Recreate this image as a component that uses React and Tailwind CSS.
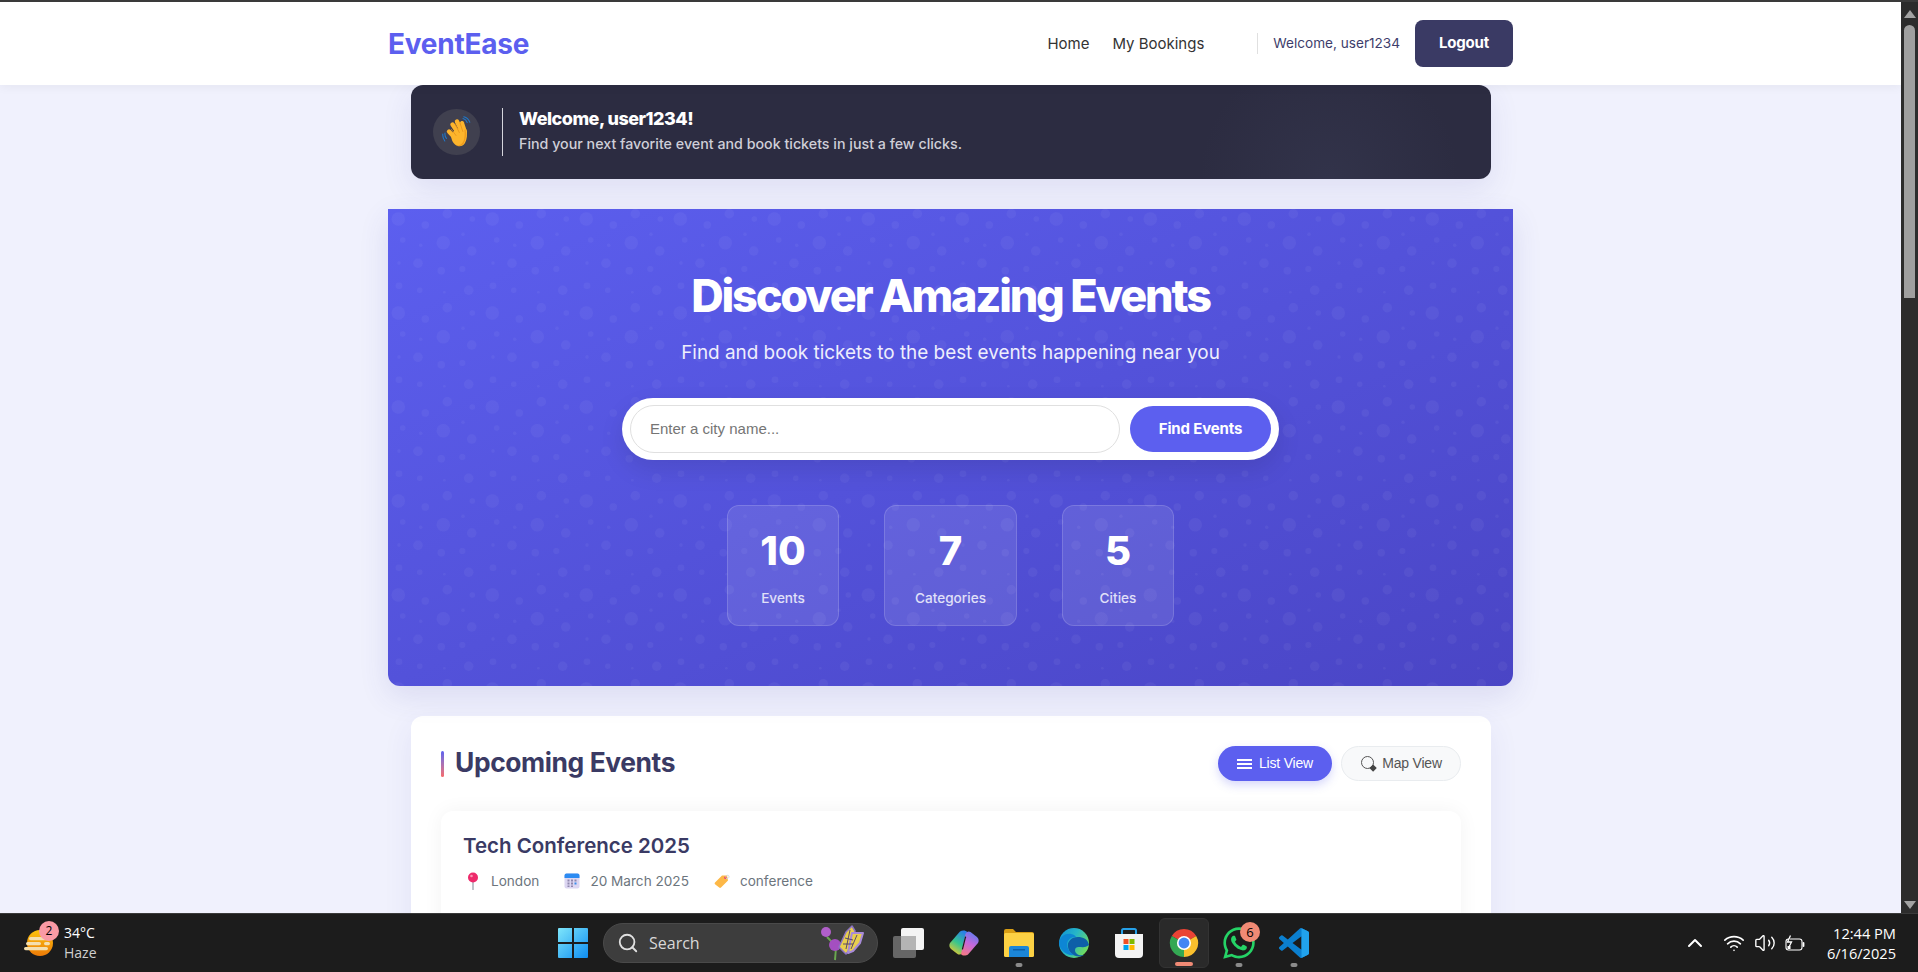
import React from "react";
import { ChevronUp, Search, Volume2, Wifi } from "lucide-react";
import { FaWhatsapp } from "react-icons/fa";

const INTER = "font-['Inter',sans-serif]";

// circles of the hero's repeating dot tile
const DOTS = [
  [10.3, 10, 6.7], [37.3, 16, 3.7], [59.3, 4.7, 4.7], [84.3, 10, 2.7], [14.7, 31, 2.7], [32.7, 36.3, 1.7],
  [55.3, 33.7, 6.7], [75, 25.3, 1.7], [83.7, 42, 4.7], [11, 54, 1.7], [30, 54.3, 4.7], [53.3, 61.7, 3.7],
  [74.3, 60, 3], [11, 76.7, 3.3], [31.7, 81.3, 2.7], [56.3, 83.3, 1.3], [80.7, 81.3, 4.7],
];

const STATS = [
  { value: "10", label: "Events", width: "w-[112px]" },
  { value: "7", label: "Categories", width: "w-[133px]" },
  { value: "5", label: "Cities", width: "w-[112px]" },
];

const HeroDots = () => (
  <svg className="absolute inset-0 w-full h-full" aria-hidden="true">
    <defs>
      <pattern id="hero-dots" width="94" height="94" patternUnits="userSpaceOnUse">
        {DOTS.map(([cx, cy, r]) => (
          <circle key={`${cx}-${cy}`} cx={cx} cy={cy} r={r} fill="#fff" fillOpacity="0.045" />
        ))}
      </pattern>
    </defs>
    <rect width="100%" height="100%" fill="url(#hero-dots)" />
  </svg>
);

const WaveHand = () => (
  <svg width="30" height="32" viewBox="0 0 30 32" fill="none">
    <path d="M3 17c-.3 2 .3 4 1.500 5.500M.8 18c-.3 2.700.5 5 2 7" stroke="#1f77c9" strokeWidth="1.100" strokeLinecap="round" />
    <path d="M21 2.500c2 .5 3.500 2 4.200 4M21.800.7c3 .7 5 2.800 6 5.500" stroke="#1f77c9" strokeWidth="1.100" strokeLinecap="round" />
    <g stroke="#fdb52c" strokeLinecap="round">
      <path d="M7 15.500l6 6.500" strokeWidth="4.400" />
      <path d="M10.500 8.500l6 9" strokeWidth="4.400" />
      <path d="M15 5.500l5 10" strokeWidth="4.400" />
      <path d="M20 7l3 9" strokeWidth="4" />
    </g>
    <path d="M9 20c2-6 7-9 12-7l3.500.5c1 5 .5 10-1.500 13.500-2.500 4-7 4-10 1.500C11 27 9.500 24 9 20z" fill="#fdb52c" />
    <path d="M23.500 13.500c1 5 .5 10-1.500 13.500-2 3-5 3.800-8 2.800 4 0 6.500-2 7.700-5 1-3 1.200-7 .8-11z" fill="#ee9a1b" />
    <path d="M9.500 13.500l4.500 6M13.300 8.500l4 8M18 7l2.800 8.500" stroke="#e5921a" strokeWidth=".8" strokeLinecap="round" />
  </svg>
);

const PinIcon = () => (
  <svg width="16" height="18" viewBox="0 0 16 18">
    <path d="M8 8v9.500" stroke="#a9aeb8" strokeWidth="1.500" strokeLinecap="round" />
    <circle cx="8" cy="5.500" r="5" fill="#ee2a6b" />
    <circle cx="6.500" cy="4" r="1.300" fill="#fb94b4" />
  </svg>
);

const CalendarIcon = () => (
  <svg width="16" height="16" viewBox="0 0 16 16">
    <rect x="0.500" y="0.500" width="15" height="15" rx="2" fill="#dcd6f2" />
    <path d="M.5 5V2.500a2 2 0 0 1 2-2h11a2 2 0 0 1 2 2V5z" fill="#2c8bf2" />
    <g fill="#8f88ad">
      <rect x="3.500" y="6.500" width="2" height="2" /><rect x="7" y="6.500" width="2" height="2" /><rect x="10.500" y="6.500" width="2" height="2" />
      <rect x="3.500" y="9.500" width="2" height="2" /><rect x="7" y="9.500" width="2" height="2" /><rect x="10.500" y="9.500" width="2" height="2" fill="#3b8eea" />
      <rect x="3.500" y="12.500" width="2" height="1.500" /><rect x="7" y="12.500" width="2" height="1.500" />
    </g>
  </svg>
);

const TagIcon = () => (
  <svg width="16" height="15" viewBox="0 0 16 15">
    <path d="M1 8.500L8 1.500 13 1.500 14 6.500 7 13.500a1.300 1.300 0 0 1-1.800 0L1 10.300a1.300 1.300 0 0 1 0-1.800z" fill="#fdb847" />
    <circle cx="11.300" cy="3.800" r="1.200" fill="#e9476c" />
    <path d="M11.500 3.500C12 1 14.800.5 15 2.500c.2 1.500-1.500 2.500-3 2" stroke="#c9ced6" strokeWidth=".8" fill="none" />
  </svg>
);

const MapGlyph = () => (
  <svg width="18" height="18" viewBox="0 0 18 18" fill="none">
    <circle cx="7.500" cy="7.500" r="6" stroke="#555" strokeWidth="1" />
    <rect x="10.500" y="10.500" width="5.200" height="5.200" transform="rotate(45 13.100 13.100)" fill="#444" />
  </svg>
);

const WeatherIcon = () => (
  <svg width="30" height="28" viewBox="0 0 30 28">
    <defs>
      <linearGradient id="sun" x1="0" y1="0" x2="0" y2="1">
        <stop offset="0" stopColor="#fcc30b" />
        <stop offset="1" stopColor="#ec7a08" />
      </linearGradient>
    </defs>
    <circle cx="16" cy="14" r="13" fill="url(#sun)" />
    <g fill="#f4dfae">
      <rect x="5" y="8" width="22" height="3.200" rx="1.600" />
      <rect x="2" y="13" width="15" height="3.200" rx="1.600" />
      <rect x="20" y="13" width="6" height="3.200" rx="1.600" />
      <rect x="0" y="18" width="24" height="3.200" rx="1.600" />
    </g>
  </svg>
);

const WindowsLogo = () => (
  <svg width="30" height="30" viewBox="0 0 30 30">
    <defs>
      <linearGradient id="win" x1="0" y1="0" x2="1" y2="1">
        <stop offset="0" stopColor="#7ee6fb" />
        <stop offset="1" stopColor="#0f8df0" />
      </linearGradient>
    </defs>
    <path d="M0 1a1 1 0 0 1 1-1h13v14H0zM16 0h13a1 1 0 0 1 1 1v13H16zM0 16h14v14H1a1 1 0 0 1-1-1zM16 16h14v13a1 1 0 0 1-1 1H16z" fill="url(#win)" />
  </svg>
);

const Butterfly = () => (
  <svg width="46" height="36" viewBox="0 0 46 36">
    <path d="M16 18c1 6 1 11 0 17M8 12c3 3 6 5 8 10" stroke="#6aa84f" strokeWidth="2" fill="none" />
    <circle cx="7" cy="7" r="5" fill="#b05fc9" />
    <circle cx="16" cy="20" r="6" fill="#a44fc0" />
    <path d="M20 22L27 7l6-6 3 5-2 14-7 9z" fill="#e8cf4e" stroke="#8d74c4" strokeWidth="1.500" strokeLinejoin="round" />
    <path d="M33 8l11 0-3 10-7 8-5 2z" fill="#e8cf4e" stroke="#a88bd8" strokeWidth="2" strokeLinejoin="round" />
    <path d="M26 13l8 2M24 19l10 0M31 5l-4 19M38 10l-6 14" stroke="#4b3a6d" strokeWidth=".9" />
  </svg>
);

const TaskView = () => (
  <svg width="32" height="30" viewBox="0 0 32 30">
    <rect x="0" y="8" width="23" height="22" rx="2" fill="#666" />
    <rect x="8" y="0" width="23" height="22" rx="2" fill="#f4f4f4" />
    <rect x="8" y="8" width="15" height="14" fill="#b4b4b4" />
  </svg>
);

const Copilot = () => (
  <svg width="30" height="30" viewBox="0 0 30 30">
    <defs>
      <linearGradient id="cop-a" x1="0.700" y1="0" x2="0.200" y2="1">
        <stop offset="0" stopColor="#2a7fe8" />
        <stop offset="0.500" stopColor="#36c58e" />
        <stop offset="1" stopColor="#f6c928" />
      </linearGradient>
      <linearGradient id="cop-b" x1="0.700" y1="0" x2="0.300" y2="1">
        <stop offset="0" stopColor="#f2788a" />
        <stop offset="0.500" stopColor="#c468dc" />
        <stop offset="1" stopColor="#5a7df0" />
      </linearGradient>
    </defs>
    <path d="M11 3.500C13 2 17 2 18 4L13.500 24c-.5 2-3 3.500-5 2L2 21C0 19 0 17 1 15Z" fill="url(#cop-a)" />
    <path d="M11 3.500C13 2 17 2 18 4L13.500 24c-.5 2-3 3.500-5 2L2 21C0 19 0 17 1 15Z" fill="url(#cop-b)" transform="rotate(180 15 15)" />
    <path d="M16.500 9l-3 12" stroke="#1c1c1c" strokeWidth="1.200" strokeLinecap="round" />
  </svg>
);

const Explorer = () => (
  <svg width="30" height="28" viewBox="0 0 30 28">
    <path d="M0 2a2 2 0 0 1 2-2h7l3 3h16a2 2 0 0 1 2 2v3H0z" fill="#d99e14" />
    <rect x="0" y="4" width="30" height="24" rx="1.500" fill="#fcd144" />
    <path d="M5 19a2 2 0 0 1 2-2h16a2 2 0 0 1 2 2v9H5z" fill="#1b86d8" />
    <rect x="9" y="20" width="12" height="1.500" fill="#0c5fa8" />
  </svg>
);

const Edge = () => (
  <svg width="30" height="30" viewBox="0 0 30 30">
    <defs>
      <linearGradient id="edge" x1="0" y1="0" x2="1" y2="0.600">
        <stop offset="0" stopColor="#0f8fd8" />
        <stop offset="0.500" stopColor="#26b6c7" />
        <stop offset="1" stopColor="#6fdb5f" />
      </linearGradient>
    </defs>
    <circle cx="15" cy="15" r="15" fill="url(#edge)" />
    <path d="M30 17c-1-6-6-8-11-8-7 0-11 5-10 10 1 6 6 10 12 9.500 2-.2 3-.7 4-1.500-5 1-9-1-9-5 0-2 1.500-3 3.500-3 4 0 7 1 10.500-2z" fill="#0e5fa8" />
    <path d="M0 15C1 8 7 5 12 6c3 .5 4.500 2 5 3-6-.5-10 4-8.500 10 .7 3 3 6 6.500 8-6 1.500-14-4-15-12z" fill="#0d86d4" />
  </svg>
);

const Store = () => (
  <svg width="30" height="30" viewBox="0 0 30 30">
    <path d="M8 6V2.500A1.500 1.500 0 0 1 9.500 1h11A1.500 1.500 0 0 1 22 2.500V6" stroke="#26a0e8" strokeWidth="2" fill="none" />
    <path d="M1 6h28v20a4 4 0 0 1-4 4H5a4 4 0 0 1-4-4z" fill="#f3f3f3" />
    <rect x="9.500" y="11" width="5" height="5" fill="#f25022" />
    <rect x="15.500" y="11" width="5" height="5" fill="#7fba00" />
    <rect x="9.500" y="17" width="5" height="5" fill="#00a4ef" />
    <rect x="15.500" y="17" width="5" height="5" fill="#ffb900" />
  </svg>
);

const Chrome = () => (
  <svg width="30" height="30" viewBox="0 0 32 32">
    <path d="M16 16L3 8.500A15 15 0 0 1 29 8.500Z" fill="#ea4335" />
    <path d="M16 16L29 8.500A15 15 0 0 1 16 31Z" fill="#fbc02d" />
    <path d="M16 16L16 31A15 15 0 0 1 3 8.500Z" fill="#34a853" />
    <circle cx="16" cy="16" r="7.500" fill="#fff" />
    <circle cx="16" cy="16" r="5.800" fill="#4285f4" />
  </svg>
);

const VsCode = () => (
  <svg width="30" height="30" viewBox="0 0 24 24">
    <path d="M23.15 2.587L18.21.21a1.494 1.494 0 0 0-1.705.29l-9.46 8.63-4.12-3.128a.999.999 0 0 0-1.276.057L.327 7.261A1 1 0 0 0 .326 8.74L3.899 12 .326 15.26a1 1 0 0 0 .001 1.479L1.65 17.94a.999.999 0 0 0 1.276.057l4.12-3.128 9.46 8.63a1.492 1.492 0 0 0 1.704.29l4.942-2.377A1.5 1.5 0 0 0 24 20.06V3.939a1.5 1.5 0 0 0-.85-1.352zm-5.146 14.861L10.826 12l7.178-5.448v10.896z" fill="#0b7fcf" />
    <path d="M18 0.100l5.150 2.487A1.500 1.500 0 0 1 24 3.939V20.060a1.500 1.500 0 0 1-.85 1.353L18 23.900V17.448L18.004 6.552z" fill="#21a2ec" />
  </svg>
);

const BatteryIcon = () => (
  <svg width="21" height="17" viewBox="0 0 21 17" fill="none" stroke="#fff" strokeWidth="1.100">
    <rect x="1" y="4" width="16" height="11" rx="2.500" />
    <path d="M18.500 8v3" strokeWidth="1.800" strokeLinecap="round" />
    <path d="M5.500 0.500L2.500 7h4L4 12" fill="#1c1c1c" strokeWidth="1.300" />
    <rect x="2.500" y="11" width="3" height="3" fill="#fff" stroke="none" />
  </svg>
);

const Dot = ({ wide }) => (
  <span className={wide ? "absolute bottom-[1px] left-1/2 -translate-x-1/2 w-[18px] h-[4px] rounded-full bg-[#f08a75]" : "absolute bottom-[1px] left-1/2 -translate-x-1/2 w-[7px] h-[4px] rounded-full bg-[#8b8b8b]"} />
);

const Navbar = () => (
  <nav className="h-[83px] bg-white shadow-[0_2px_10px_rgba(0,0,0,0.05)] relative z-10">
    <div className="w-[1125px] mx-auto h-full flex items-center">
      <span className="text-[28px] font-bold text-[#5c5fef] tracking-[-0.25px]">EventEase</span>
      <a className="ml-auto pt-[2px] text-[15px] font-normal text-[#333]">Home</a>
      <a className="ml-[23px] pt-[2px] text-[15px] font-normal text-[#333]">My Bookings</a>
      <div className="ml-[53px] w-px h-[21px] bg-[#e0e0e0]"></div>
      <span className="ml-[15px] text-[13.6px] font-normal text-[#3d3d6b]">Welcome, user1234</span>
      <button className="ml-[15px] w-[98px] h-[47px] rounded-lg bg-[#3a3a64] text-white text-[15px] font-bold tracking-[-0.2px]">Logout</button>
    </div>
  </nav>
);

const WelcomeBanner = () => (
  <div className="ml-[23px] mr-[22px] h-[94px] rounded-xl bg-[#2c2c41] bg-[radial-gradient(circle_at_85%_100%,#32334a,#2c2c41_14%)] flex items-center pl-[22px] shadow-[0_10px_30px_rgba(60,60,160,0.1)]">
    <div className="w-[47px] h-[46px] rounded-full bg-[#40404f] flex items-center justify-center">
      <WaveHand />
    </div>
    <div className="ml-[22px] w-px h-[48px] bg-[#d5d5dc]"></div>
    <div className="ml-4 -mt-[3px]">
      <h3 className="text-[18px] leading-[26px] font-extrabold text-white tracking-[-0.5px]">Welcome, user1234!</h3>
      <p className="text-[14.25px] leading-[23px] font-medium text-[#cfcfd8]">Find your next favorite event and book tickets in just a few clicks.</p>
    </div>
  </div>
);

const Hero = () => (
  <section className="relative mt-[30px] h-[477px] rounded-b-xl overflow-hidden bg-gradient-to-br from-[#5c5fef] to-[#4a45c5] shadow-[0_10px_30px_rgba(60,60,160,0.12)] pt-[60px]">
    <HeroDots />
    <div className="relative flex flex-col items-center">
      <h1 className="text-[45px] leading-[54px] font-extrabold text-white tracking-[-2.2px]">Discover Amazing Events</h1>
      <p className="mt-[15px] text-[18.9px] leading-[30px] font-normal text-[#eeeefc]">Find and book tickets to the best events happening near you</p>
      <div className="mt-[30px] w-[657px] h-[62px] rounded-full bg-white flex items-center pl-2 pr-2 shadow-[0_10px_25px_rgba(0,0,0,0.1)]">
        <input
          placeholder="Enter a city name..."
          className="w-[490px] h-[48px] rounded-full border border-[#e0e0e0] bg-white pl-[19px] pr-5 pb-px text-[15px] font-['Liberation_Sans',sans-serif] outline-none placeholder:text-[#757575]"
        />
        <button className="ml-[10px] w-[141px] h-[46px] rounded-full bg-[#5c5fef] text-white text-[15px] font-bold tracking-[-0.15px]">Find Events</button>
      </div>
      <div className="mt-[45px] flex gap-[45px]">
        {STATS.map((stat) => (
          <div key={stat.label} className={`${stat.width} h-[121px] pt-[21px] rounded-xl bg-white/10 border border-white/15 flex flex-col items-center`}>
            <span className="text-[40px] leading-[48px] font-extrabold text-white">{stat.value}</span>
            <span className="mt-[13px] text-[13.6px] leading-[21px] font-medium text-[#e0e0f8]">{stat.label}</span>
          </div>
        ))}
      </div>
    </div>
  </section>
);

const EventsSection = () => (
  <section className="ml-[23px] mr-[22px] mt-[30px] bg-white rounded-t-xl pl-[30px] pr-[30px] pt-[30px] h-[400px] shadow-[0_10px_30px_rgba(60,60,160,0.08)]">
    <div className="flex items-center justify-between h-[35px]">
      <div className="flex items-center">
        <span className="w-[3px] h-[26px] rounded-full bg-gradient-to-b from-[#5c5fef] to-[#f76a6a]"></span>
        <h2 className="ml-[11px] -mt-[2px] text-[26.4px] font-bold text-[#3a3a64] tracking-[-0.4px]">Upcoming Events</h2>
      </div>
      <div className="flex gap-[9px] font-['Liberation_Sans',sans-serif] text-[14px] tracking-[-0.2px]">
        <button className="w-[114px] h-[35px] rounded-full bg-[#5c5fef] text-white flex items-center justify-center gap-[7px] shadow-[0_4px_10px_rgba(92,95,239,0.25)]">
          <span className="flex flex-col gap-[2px]">
            <span className="block w-[15px] h-[2px] bg-white"></span>
            <span className="block w-[15px] h-[2px] bg-white"></span>
            <span className="block w-[15px] h-[2px] bg-white"></span>
          </span>
          List View
        </button>
        <button className="w-[120px] h-[35px] rounded-full bg-[#f8f9fa] border border-[#e9ecef] text-[#555] flex items-center justify-center gap-[4px]">
          <MapGlyph />
          Map View
        </button>
      </div>
    </div>
    <div className="mt-[30px] rounded-xl bg-white h-[300px] px-[22px] pt-[21px] shadow-[0_0_20px_rgba(0,0,0,0.05)]">
      <h3 className="text-[20.5px] leading-[28px] font-semibold text-[#3a3a64]">Tech Conference 2025</h3>
      <div className="mt-[10px] flex items-center gap-[23px] text-[13.6px] leading-[22px] text-[#6c757d]">
        <span className="flex items-center gap-2"><span className="w-5 flex justify-center"><PinIcon /></span>London</span>
        <span className="flex items-center gap-2"><span className="w-5 flex justify-center"><CalendarIcon /></span>20 March 2025</span>
        <span className="flex items-center gap-2"><span className="w-5 flex justify-center"><TagIcon /></span>conference</span>
      </div>
    </div>
  </section>
);

const Scrollbar = () => (
  <div className="w-[17px] bg-[#2c2c2c] flex flex-col items-center">
    <svg className="mt-[8px]" width="12" height="8" viewBox="0 0 12 8"><path d="M6 0l6 8H0z" fill="#a3a3a3" /></svg>
    <div className="mt-[7px] w-[11px] h-[273px] rounded-t-[6px] bg-[#9f9f9f]"></div>
    <svg className="mt-auto mb-[4px]" width="12" height="8" viewBox="0 0 12 8"><path d="M6 8l6-8H0z" fill="#a3a3a3" /></svg>
  </div>
);

const Taskbar = () => (
  <footer className="h-[59px] shrink-0 bg-[#1c1c1c] border-t border-[#3a3a3a] flex items-center font-['Open_Sans',sans-serif] text-white">
    <div className="w-[558px] pl-[24px] flex items-center relative">
      <WeatherIcon />
      <span className="absolute left-[39px] -top-[2px] w-5 h-5 rounded-full bg-[#f99aa5] text-black text-[12px] leading-5 text-center">2</span>
      <div className="ml-[10px] flex flex-col">
        <span className="text-[14px] leading-[20px]">34°C</span>
        <span className="text-[14px] leading-[20px] text-[#cfcfcf]">Haze</span>
      </div>
    </div>
    <WindowsLogo />
    <div className="ml-[15px] w-[275px] h-[40px] rounded-full bg-[#3d3d3d] border border-[#4a4a4a] flex items-center pl-[13px] pr-[12px]">
      <Search size={22} strokeWidth={2} className="text-[#e0e0e0]" />
      <span className="ml-[10px] text-[16px] text-[#d8d8d8]">Search</span>
      <span className="ml-auto"><Butterfly /></span>
    </div>
    <div className="ml-[6px] flex gap-[5px]">
      <div className="relative w-[50px] h-[50px] flex items-center justify-center"><TaskView /></div>
      <div className="relative w-[50px] h-[50px] flex items-center justify-center"><Copilot /></div>
      <div className="relative w-[50px] h-[50px] flex items-center justify-center"><Explorer /><Dot /></div>
      <div className="relative w-[50px] h-[50px] flex items-center justify-center"><Edge /></div>
      <div className="relative w-[50px] h-[50px] flex items-center justify-center"><Store /></div>
      <div className="relative w-[50px] h-[50px] rounded-md bg-[#2a2a2a] border border-[#333] flex items-center justify-center"><Chrome /><Dot wide /></div>
      <div className="relative w-[50px] h-[50px] flex items-center justify-center">
        <FaWhatsapp size={36} className="text-[#25d366]" />
        <span className="absolute top-[4px] right-[4px] w-5 h-5 rounded-full bg-[#f08a75] text-black text-[13px] leading-5 text-center">6</span>
        <Dot />
      </div>
      <div className="relative w-[50px] h-[50px] flex items-center justify-center"><VsCode /><Dot /></div>
    </div>
    <div className="ml-auto flex items-center pr-[22px]">
      <ChevronUp size={24} strokeWidth={2} />
      <Wifi size={22} strokeWidth={1.800} className="ml-[16px]" />
      <Volume2 size={22} strokeWidth={1.500} className="ml-[9px]" />
      <span className="ml-[9px]"><BatteryIcon /></span>
      <div className="ml-[21px] flex flex-col items-end text-[14.6px] leading-[20px]">
        <span>12:44 PM</span>
        <span>6/16/2025</span>
      </div>
    </div>
  </footer>
);

export default function App() {
  return (
    <div className={`h-screen flex flex-col overflow-hidden border-t-2 border-[#3a3a3a] ${INTER}`}>
      <div className="flex-1 min-h-0 flex">
        <main className="flex-1 min-w-0 overflow-hidden bg-[#f0f1fd]">
          <Navbar />
          <div className="w-[1125px] mx-auto">
            <WelcomeBanner />
            <Hero />
            <EventsSection />
          </div>
        </main>
        <Scrollbar />
      </div>
      <Taskbar />
    </div>
  );
}
